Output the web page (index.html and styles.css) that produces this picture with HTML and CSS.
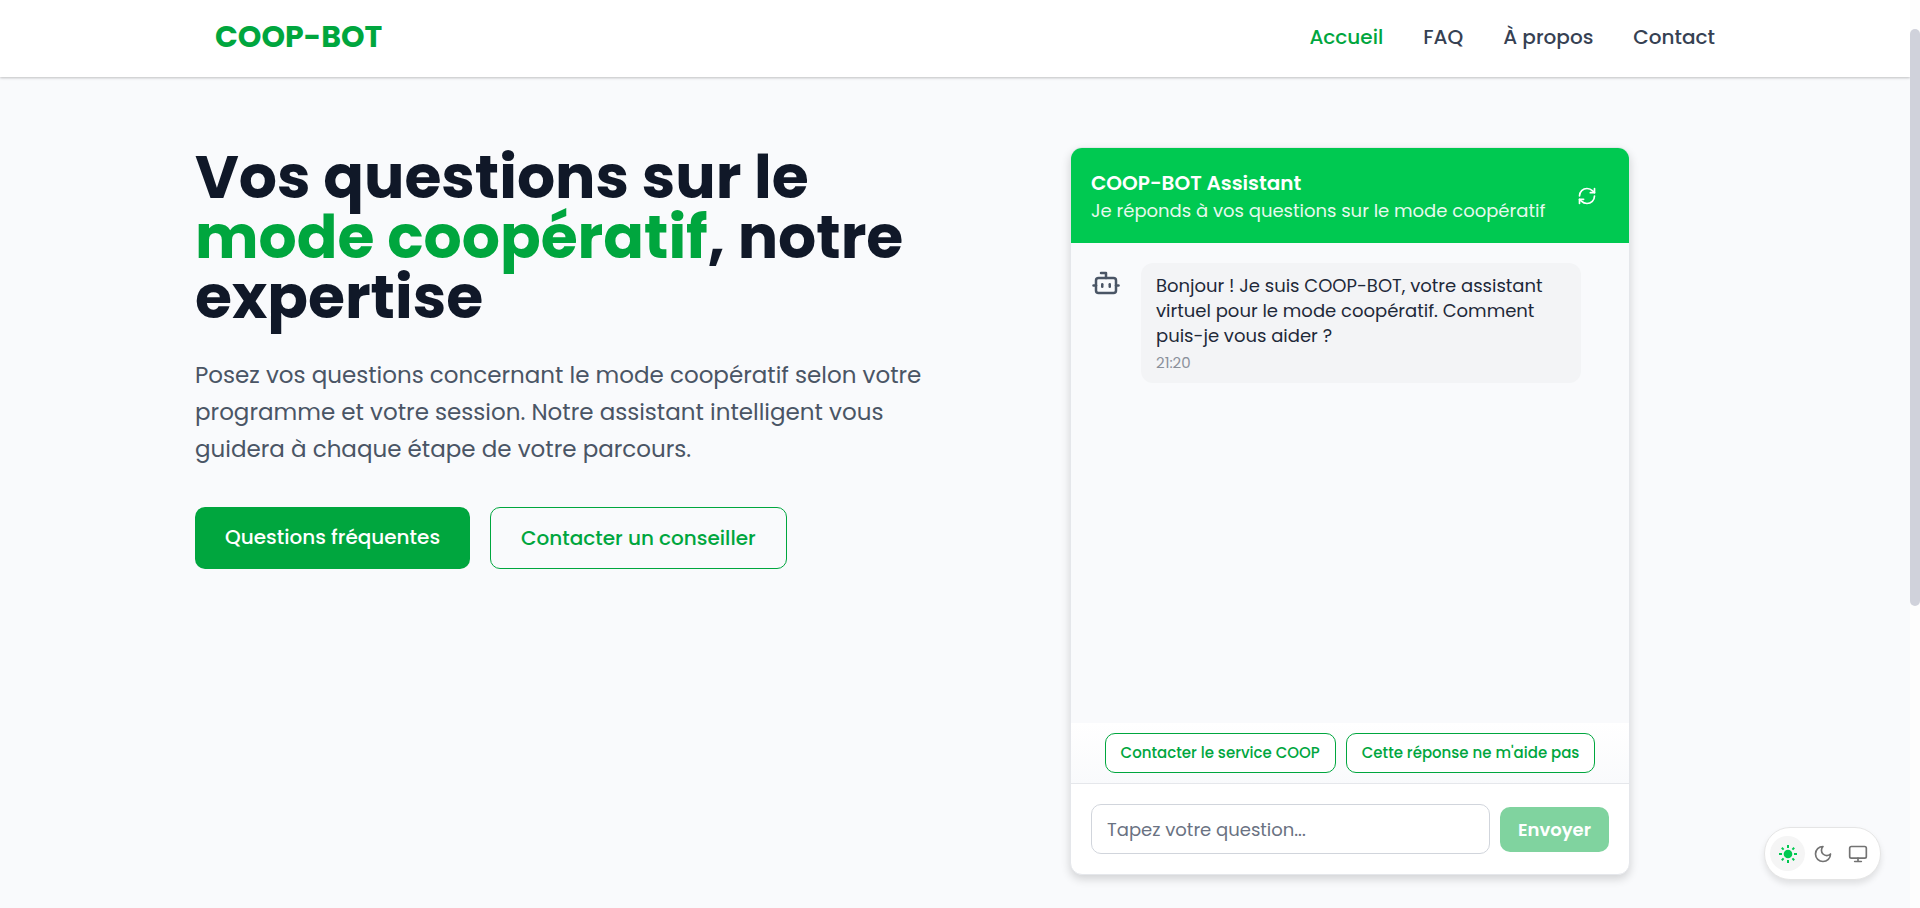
FILE: index.html
```html
<!DOCTYPE html>
<html lang="fr">
<head>
<meta charset="utf-8">
<meta name="viewport" content="width=device-width, initial-scale=1">
<title>COOP-BOT</title>
<link rel="stylesheet" href="styles.css">
</head>
<body>
<header class="site-header">
  <div class="container site-header-inner">
    <a class="logo" href="#">COOP-BOT</a>
    <nav class="nav">
      <a class="nav-link active" href="#">Accueil</a>
      <a class="nav-link" href="#">FAQ</a>
      <a class="nav-link" href="#">À propos</a>
      <a class="nav-link" href="#">Contact</a>
    </nav>
  </div>
</header>

<main class="container hero">
  <section class="intro">
    <h1 class="title">Vos questions sur le <span class="accent">mode coopératif</span>, notre expertise</h1>
    <p class="lead">Posez vos questions concernant le mode coopératif selon votre programme et votre session. Notre assistant intelligent vous guidera à chaque étape de votre parcours.</p>
    <div class="actions">
      <a class="btn btn-solid" href="#">Questions fréquentes</a>
      <a class="btn btn-outline" href="#">Contacter un conseiller</a>
    </div>
  </section>

  <section class="chat">
    <div class="chat-header">
      <div>
        <h2 class="chat-title">COOP-BOT Assistant</h2>
        <p class="chat-subtitle">Je réponds à vos questions sur le mode coopératif</p>
      </div>
      <button class="icon-btn" type="button" aria-label="Réinitialiser">
        <svg width="20" height="20" viewBox="0 0 24 24" fill="none" stroke="currentColor" stroke-width="2" stroke-linecap="round" stroke-linejoin="round"><path d="M3 12a9 9 0 0 1 9-9 9.75 9.75 0 0 1 6.74 2.74L21 8"/><path d="M21 3v5h-5"/><path d="M21 12a9 9 0 0 1-9 9 9.75 9.75 0 0 1-6.74-2.74L3 16"/><path d="M8 16H3v5"/></svg>
      </button>
    </div>
    <div class="messages">
      <div class="message">
        <svg class="avatar" width="30" height="30" viewBox="0 0 24 24" fill="none" stroke="currentColor" stroke-width="2" stroke-linecap="round" stroke-linejoin="round"><path d="M12 8V4H8"/><rect width="16" height="12" x="4" y="8" rx="2"/><path d="M2 14h2"/><path d="M20 14h2"/><path d="M15 13v2"/><path d="M9 13v2"/></svg>
        <div class="bubble">
          <p class="bubble-text">Bonjour ! Je suis COOP-BOT, votre assistant virtuel pour le mode coopératif. Comment puis-je vous aider ?</p>
          <time class="time">21:20</time>
        </div>
      </div>
    </div>
    <div class="suggestions">
      <button class="chip" type="button">Contacter le service COOP</button>
      <button class="chip" type="button">Cette réponse ne m'aide pas</button>
    </div>
    <form class="composer">
      <input class="field" type="text" aria-label="Votre question" placeholder="Tapez votre question...">
      <button class="send" type="submit" disabled>Envoyer</button>
    </form>
  </section>
</main>

<div class="theme-switch">
  <button class="theme-btn selected" type="button" aria-label="Thème clair">
    <svg width="20" height="20" viewBox="0 0 20 20" fill="none" stroke="currentColor" stroke-width="2"><circle cx="10" cy="10" r="4.3" fill="currentColor" stroke="none"/><path d="M10 1v3M10 16v3M1 10h3M16 10h3M3.8 3.8l1.8 1.8M14.4 14.4l1.8 1.8M3.8 16.2l1.8-1.8M14.4 5.6l1.8-1.8"/></svg>
  </button>
  <button class="theme-btn" type="button" aria-label="Thème sombre">
    <svg width="20" height="20" viewBox="0 0 24 24" fill="none" stroke="currentColor" stroke-width="2" stroke-linecap="round" stroke-linejoin="round"><path d="M12 3a6 6 0 0 0 9 9 9 9 0 1 1-9-9Z"/></svg>
  </button>
  <button class="theme-btn" type="button" aria-label="Thème du système">
    <svg width="20" height="20" viewBox="0 0 24 24" fill="none" stroke="currentColor" stroke-width="2" stroke-linecap="round" stroke-linejoin="round"><rect width="20" height="14" x="2" y="3" rx="2"/><path d="M8 21h8M12 17v4"/></svg>
  </button>
</div>
<div class="scroll-track" aria-hidden="true"><div class="scroll-thumb"></div></div>
</body>
</html>
```
FILE: styles.css
```css
* {
  box-sizing: border-box;
}

body {
  margin: 0;
  padding-right: 10px;
  min-height: 100vh;
  background: #f9fafc;
  color: #101828;
  font-family: Poppins, Inter, "Liberation Sans", sans-serif;
  font-size: 18px;
}

h1,
h2,
p {
  margin: 0;
}

a {
  text-decoration: none;
}

button,
input {
  font: inherit;
}

button {
  margin: 0;
  padding: 0;
  border: 0;
  background: none;
}

svg {
  display: block;
}

.container {
  max-width: 1520px;
  margin: 0 auto;
}

.site-header {
  background: #fff;
  box-shadow: 0 1px 3px rgba(0, 0, 0, 0.15), 0 1px 2px rgba(0, 0, 0, 0.1);
}

.site-header-inner {
  display: flex;
  align-items: center;
  justify-content: space-between;
  padding: 14px 0 18px 20px;
}

.logo {
  color: #00a63e;
  font-size: 30px;
  font-weight: 700;
  line-height: 45px;
}

.nav {
  display: flex;
  gap: 40px;
}

.nav-link {
  color: #364153;
  font-size: 20px;
  font-weight: 500;
  line-height: 30px;
}

.nav-link.active {
  color: #00a63e;
}

.hero {
  display: grid;
  grid-template-columns: 1fr 1fr;
  gap: 60px;
  padding: 70px 0 33px;
}

.title {
  font-size: 60px;
  font-weight: 700;
  line-height: 60px;
}

.accent {
  color: #00a63e;
}

.lead {
  margin-top: 30px;
  color: #4a5565;
  font-size: 23px;
  line-height: 37px;
}

.actions {
  display: flex;
  gap: 20px;
  margin-top: 39px;
}

.btn {
  padding: 15px 30px;
  border-radius: 10px;
  font-size: 20px;
  font-weight: 500;
  line-height: 30px;
}

.btn-solid {
  background: #00a63e;
  color: #fff;
}

.btn-outline {
  border: 1px solid #00a63e;
  color: #00a63e;
}

.chat {
  display: flex;
  flex-direction: column;
  justify-self: center;
  width: 100%;
  max-width: 560px;
  overflow: hidden;
  border: 1px solid #e5e7eb;
  border-radius: 12px;
  background: #fff;
  box-shadow: 0 4px 10px rgba(0, 0, 0, 0.16);
}

.chat-header {
  display: flex;
  align-items: center;
  justify-content: space-between;
  padding: 20px;
  background: #00c951;
  color: #fff;
}

.chat-title {
  font-size: 20px;
  font-weight: 600;
  line-height: 30px;
}

.chat-subtitle {
  font-size: 18px;
  line-height: 25px;
  opacity: 0.9;
}

.icon-btn {
  padding: 12px;
  color: #fff;
}

.messages {
  min-height: 480px;
  padding: 20px;
  background: #f9fafc;
}

.message {
  display: flex;
  align-items: flex-start;
  gap: 20px;
}

.avatar {
  flex: none;
  margin-top: 5px;
  color: #4a5565;
}

.bubble {
  flex: 1;
  max-width: 440px;
  padding: 10px 15px;
  border-radius: 12px;
  background: #f3f4f6;
}

.bubble-text {
  color: #1e2939;
  line-height: 25px;
}

.time {
  display: block;
  margin-top: 5px;
  color: #8a909b;
  font-size: 15px;
  line-height: 20px;
}

.suggestions {
  display: flex;
  justify-content: center;
  gap: 10px;
  padding: 10px;
  background: linear-gradient(#fff, #f9fafc);
}

.chip {
  padding: 9px 15px;
  border: 1px solid #00a63e;
  border-radius: 10px;
  background: #fff;
  color: #00a63e;
  font-size: 15px;
  font-weight: 500;
  line-height: 20px;
}

.composer {
  display: flex;
  align-items: center;
  gap: 10px;
  padding: 20px;
  border-top: 1px solid #e5e7eb;
}

.field {
  flex: 1;
  min-width: 0;
  height: 50px;
  padding: 0 15px;
  border: 1px solid #d1d5dc;
  border-radius: 10px;
  background: #fff;
  font-size: 18px;
}

.field::placeholder {
  color: #6a7282;
}

.send {
  padding: 10px 18px;
  border-radius: 10px;
  background: #80d39f;
  color: #fff;
  font-size: 18px;
  font-weight: 600;
  line-height: 25px;
}

.theme-switch {
  position: fixed;
  right: 39px;
  bottom: 28px;
  display: flex;
  padding: 8px 5px;
  border: 1px solid #e5e5e5;
  border-radius: 26px;
  background: #fff;
  box-shadow: 0 4px 6px rgba(0, 0, 0, 0.1);
}

.theme-btn {
  display: grid;
  place-items: center;
  width: 35px;
  height: 35px;
  border-radius: 50%;
  color: #737373;
}

.theme-btn.selected {
  background: #f5f5f5;
  color: #00c951;
}

.scroll-track {
  position: fixed;
  top: 0;
  right: 0;
  bottom: 0;
  width: 10px;
  padding-top: 29px;
  background: #fdfdfd;
}

.scroll-thumb {
  height: 577px;
  border-radius: 5px;
  background: #d0d2db;
}
```
